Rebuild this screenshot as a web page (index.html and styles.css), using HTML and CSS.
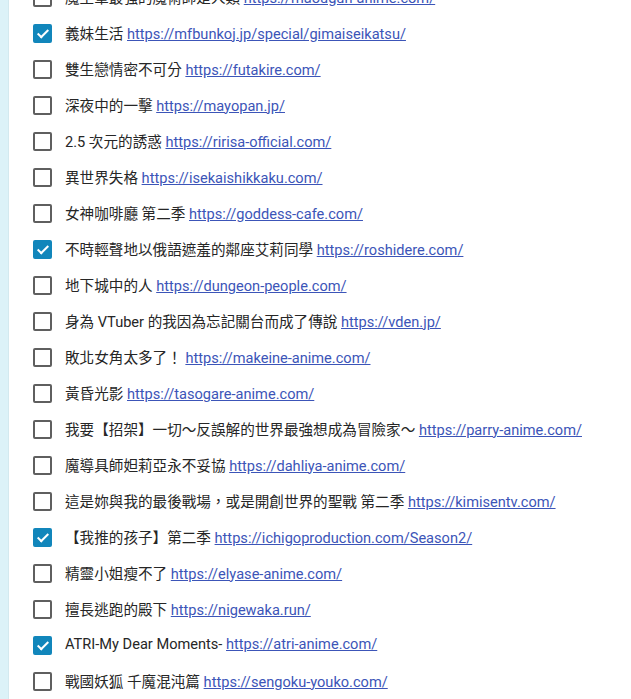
FILE: index.html
```html
<html>

<head>
    <link rel="stylesheet" href="styles.css">
    <title>Anime list</title>
</head>

<body>
    <div class="page">
        <div class="strip"></div>
        <div class="main">
            <ul class="list">
                <li class="item"><span class="box"></span><span class="label">魔王軍最強的魔術師是人類 <a href="#">https://maougun-anime.com/</a></span></li>
                <li class="item"><span class="box checked"></span><span class="label">義妹生活 <a href="#">https://mfbunkoj.jp/special/gimaiseikatsu/</a></span></li>
                <li class="item"><span class="box"></span><span class="label">雙生戀情密不可分 <a href="#">https://futakire.com/</a></span></li>
                <li class="item"><span class="box"></span><span class="label">深夜中的一擊 <a href="#">https://mayopan.jp/</a></span></li>
                <li class="item"><span class="box"></span><span class="label">2.5 次元的誘惑 <a href="#">https://ririsa-official.com/</a></span></li>
                <li class="item"><span class="box"></span><span class="label">異世界失格 <a href="#">https://isekaishikkaku.com/</a></span></li>
                <li class="item"><span class="box"></span><span class="label">女神咖啡廳 第二季 <a href="#">https://goddess-cafe.com/</a></span></li>
                <li class="item"><span class="box checked"></span><span class="label">不時輕聲地以俄語遮羞的鄰座艾莉同學 <a href="#">https://roshidere.com/</a></span></li>
                <li class="item"><span class="box"></span><span class="label">地下城中的人 <a href="#">https://dungeon-people.com/</a></span></li>
                <li class="item"><span class="box"></span><span class="label">身為 VTuber 的我因為忘記關台而成了傳說 <a href="#">https://vden.jp/</a></span></li>
                <li class="item"><span class="box"></span><span class="label">敗北女角太多了！ <a href="#">https://makeine-anime.com/</a></span></li>
                <li class="item"><span class="box"></span><span class="label">黃昏光影 <a href="#">https://tasogare-anime.com/</a></span></li>
                <li class="item"><span class="box"></span><span class="label">我要【招架】一切～反誤解的世界最強想成為冒險家～ <a href="#">https://parry-anime.com/</a></span></li>
                <li class="item"><span class="box"></span><span class="label">魔導具師妲莉亞永不妥協 <a href="#">https://dahliya-anime.com/</a></span></li>
                <li class="item"><span class="box"></span><span class="label">這是妳與我的最後戰場，或是開創世界的聖戰 第二季 <a href="#">https://kimisentv.com/</a></span></li>
                <li class="item"><span class="box checked"></span><span class="label">【我推的孩子】第二季 <a href="#">https://ichigoproduction.com/Season2/</a></span></li>
                <li class="item"><span class="box"></span><span class="label">精靈小姐瘦不了 <a href="#">https://elyase-anime.com/</a></span></li>
                <li class="item"><span class="box"></span><span class="label">擅長逃跑的殿下 <a href="#">https://nigewaka.run/</a></span></li>
                <li class="item"><span class="box checked"></span><span class="label">ATRI-My Dear Moments- <a href="#">https://atri-anime.com/</a></span></li>
                <li class="item"><span class="box"></span><span class="label">戰國妖狐 千魔混沌篇 <a href="#">https://sengoku-youko.com/</a></span></li>
            </ul>
        </div>
    </div>
</body>

</html>
```

FILE: styles.css
```css
html, body {
    margin: 0;
    padding: 0;
    height: 100%;
    overflow: hidden;
    background-color: #fff;
}

.page {
    display: flex;
    height: 100%;
}

.strip {
    width: 8px;
    flex: none;
    background-color: #dcf2f8;
    border-right: 1px solid #d3e9ef;
}

.main {
    flex: 1;
    font-family: Roboto, "Noto Sans CJK TC", sans-serif;
    font-size: 14.6px;
    color: #262626;
}

.list {
    list-style: none;
    margin: -22px 0 0 0;
    padding: 0 0 0 24px;
}

.item {
    height: 36px;
    display: flex;
    align-items: center;
    white-space: nowrap;
}

.box {
    width: 15px;
    height: 15px;
    flex: none;
    border: 2px solid #5f5f5f;
    border-radius: 2px;
    margin-right: 13px;
    position: relative;
    top: 1px;
}

.box.checked {
    background-color: #1186bb;
    border-color: #1186bb;
}

.box.checked::after {
    content: "";
    position: absolute;
    left: 5px;
    top: 1px;
    width: 4px;
    height: 9px;
    border: solid #fff;
    border-width: 0 2px 2px 0;
    transform: rotate(45deg);
}

.label a {
    color: #3c55b8;
    text-decoration: underline;
}
```
